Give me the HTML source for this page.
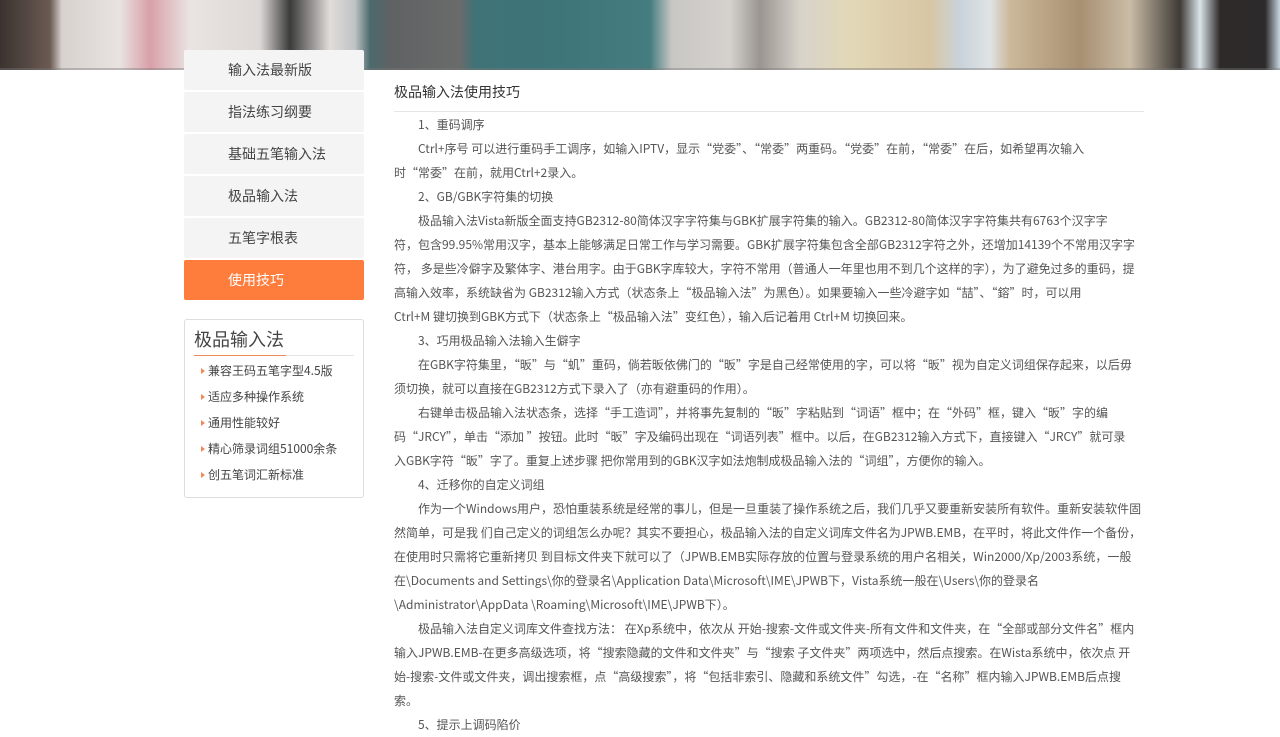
<!DOCTYPE html>
<html><head><meta charset="utf-8"><style>
body{margin:0;width:1280px;height:720px;overflow:hidden;background:#fff;font-family:"Noto Sans CJK SC","Liberation Sans",sans-serif;}
.banner{position:absolute;left:0;top:0;width:1280px;height:70px;overflow:hidden;background:linear-gradient(90deg,#3a3330 0,#6b5a52 50px,#d8d2cf 62px,#e8e2e0 120px,#d9a0a8 150px,#e9e4e2 190px,#ddd8d6 260px,#3b3b3b 290px,#e0ddda 330px,#bfc3c4 355px,#4c6a6d 370px,#5f6263 390px,#6a6b6b 460px,#3f7377 475px,#3e7579 560px,#447c80 650px,#c9c7c4 672px,#d5d2ce 730px,#9a9591 760px,#d8d3cb 800px,#e2d8b8 850px,#d8c6a4 930px,#c9d3da 960px,#dfe3e5 990px,#ccb89a 1010px,#a88f72 1080px,#c9bca6 1130px,#3e3a36 1180px,#dbe4ea 1200px,#2d2a29 1220px,#2c2a2a 1265px,#c8d6e0 1280px);}
.banner:after{content:"";position:absolute;left:0;right:0;bottom:0;height:2px;background:#777;opacity:.4}
.nav{position:absolute;left:184px;top:50px;width:180px}
.nav div{height:40px;line-height:40px;background:#f4f4f4;margin-bottom:2px;padding-left:44px;font-size:14px;color:#444;border-radius:2px}
.nav div.on{background:#ff7d3c;color:#fff}
.box{position:absolute;left:184px;top:319px;width:178px;height:177px;border:1px solid #ddd;border-radius:3px}
.box h3{margin:0;font-weight:normal;font-size:18px;line-height:24px;color:#444;position:absolute;left:9px;top:7px}
.box .ln{position:absolute;left:9px;right:9px;top:35px;height:1px;background:#e4e4e4}
.box .ln2{position:absolute;left:9px;width:92px;top:35px;height:1px;background:#f08a5a}
.box ul{list-style:none;margin:0;padding:0;position:absolute;left:15px;top:38px}
.box li{font-size:12px;color:#444;height:26px;line-height:26px;position:relative;padding-left:8px}
.box li:before{content:"";position:absolute;left:1px;top:10px;border-left:4px solid #f08a5a;border-top:3px solid transparent;border-bottom:3px solid transparent}
.main{position:absolute;left:394px;top:80px;width:750px}
.main h2{margin:0;font-weight:normal;font-size:14px;color:#333;height:31px;line-height:24px;border-bottom:1px solid #e6e6e6}
.txt{font-size:12px;line-height:24px;color:#555;margin-top:1px;white-space:nowrap}
.i{padding-left:24px}
</style></head><body>
<div class="banner"></div>
<div class="nav"><div>输入法最新版</div><div>指法练习纲要</div><div>基础五笔输入法</div><div>极品输入法</div><div>五笔字根表</div><div class="on">使用技巧</div></div>
<div class="box"><h3>极品输入法</h3><div class="ln"></div><div class="ln2"></div>
<ul><li>兼容王码五笔字型4.5版</li><li>适应多种操作系统</li><li>通用性能较好</li><li>精心筛录词组51000余条</li><li>创五笔词汇新标准</li></ul></div>
<div class="main"><h2>极品输入法使用技巧</h2>
<div class="txt">
<div class="i">1、重码调序</div>
<div class="i">Ctrl+序号 可以进行重码手工调序，如输入IPTV，显示“党委”、“常委”两重码。“党委”在前，“常委”在后，如希望再次输入</div>
<div>时“常委”在前，就用Ctrl+2录入。</div>
<div class="i">2、GB/GBK字符集的切换</div>
<div class="i">极品输入法Vista新版全面支持GB2312-80简体汉字字符集与GBK扩展字符集的输入。GB2312-80简体汉字字符集共有6763个汉字字</div>
<div>符，包含99.95%常用汉字，基本上能够满足日常工作与学习需要。GBK扩展字符集包含全部GB2312字符之外，还增加14139个不常用汉字字</div>
<div>符， 多是些冷僻字及繁体字、港台用字。由于GBK字库较大，字符不常用（普通人一年里也用不到几个这样的字），为了避免过多的重码，提</div>
<div>高输入效率，系统缺省为 GB2312输入方式（状态条上“极品输入法”为黑色）。如果要输入一些冷避字如“喆”、“鎔”时，可以用</div>
<div>Ctrl+M 键切换到GBK方式下（状态条上“极品输入法”变红色），输入后记着用 Ctrl+M 切换回来。</div>
<div class="i">3、巧用极品输入法输入生僻字</div>
<div class="i">在GBK字符集里，“昄”与“虮”重码，倘若昄依佛门的“昄”字是自己经常使用的字，可以将“昄”视为自定义词组保存起来，以后毋</div>
<div>须切换，就可以直接在GB2312方式下录入了（亦有避重码的作用）。</div>
<div class="i">右键单击极品输入法状态条，选择“手工造词”，并将事先复制的“昄”字粘贴到“词语”框中；在“外码”框，键入“昄”字的编</div>
<div>码“JRCY”，单击“添加 ”按钮。此时“昄”字及编码出现在“词语列表”框中。以后，在GB2312输入方式下，直接键入“JRCY”就可录</div>
<div>入GBK字符“昄”字了。重复上述步骤 把你常用到的GBK汉字如法炮制成极品输入法的“词组”，方便你的输入。</div>
<div class="i">4、迁移你的自定义词组</div>
<div class="i">作为一个Windows用户，恐怕重装系统是经常的事儿，但是一旦重装了操作系统之后，我们几乎又要重新安装所有软件。重新安装软件固</div>
<div>然简单，可是我 们自己定义的词组怎么办呢？其实不要担心，极品输入法的自定义词库文件名为JPWB.EMB，在平时，将此文件作一个备份，</div>
<div>在使用时只需将它重新拷贝 到目标文件夹下就可以了（JPWB.EMB实际存放的位置与登录系统的用户名相关，Win2000/Xp/2003系统，一般</div>
<div>在\Documents and Settings\你的登录名\Application Data\Microsoft\IME\JPWB下，Vista系统一般在\Users\你的登录名</div>
<div>\Administrator\AppData \Roaming\Microsoft\IME\JPWB下）。</div>
<div class="i">极品输入法自定义词库文件查找方法： 在Xp系统中，依次从 开始-搜索-文件或文件夹-所有文件和文件夹，在“全部或部分文件名”框内</div>
<div>输入JPWB.EMB-在更多高级选项，将“搜索隐藏的文件和文件夹”与“搜索 子文件夹”两项选中，然后点搜索。在Wista系统中，依次点 开</div>
<div>始-搜索-文件或文件夹，调出搜索框，点“高级搜索”，将“包括非索引、隐藏和系统文件”勾选，-在“名称”框内输入JPWB.EMB后点搜</div>
<div>索。</div>
<div class="i">5、提示上调码陷价</div>
</div></div>
</body></html>
